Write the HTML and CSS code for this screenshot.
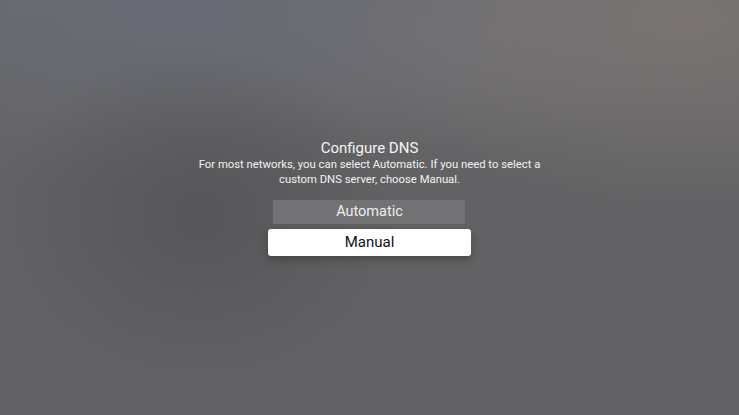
FILE: index.html
```html
<!DOCTYPE html>
<html lang="en">
<head>
<meta charset="utf-8">
<title>Configure DNS</title>
<link rel="stylesheet" href="styles.css">
</head>
<body>
<main class="screen">
  <section class="dialog">
    <h1 class="title">Configure DNS</h1>
    <p class="message">For most networks, you can select Automatic. If you need to select a<br>custom DNS server, choose Manual.</p>
    <div class="options">
      <button class="option">Automatic</button>
      <button class="option option-focused">Manual</button>
    </div>
  </section>
</main>
</body>
</html>
```
FILE: styles.css
```css
html, body {
  margin: 0;
  padding: 0;
  width: 739px;
  height: 415px;
  overflow: hidden;
}

.screen {
  width: 739px;
  height: 415px;
  box-sizing: border-box;
  padding-top: 139px;
  display: flex;
  flex-direction: column;
  align-items: center;
  font-family: Roboto, "Liberation Sans", sans-serif;
  background:
    radial-gradient(ellipse 200px 170px at 200px 215px, rgba(82,82,85,0.75), rgba(82,82,85,0) 100%),
    radial-gradient(ellipse 360px 160px at 170px 10px, rgba(104,108,118,0.9), rgba(104,108,118,0) 100%),
    radial-gradient(ellipse 340px 190px at 690px 20px, rgba(124,118,116,0.85), rgba(124,118,116,0) 100%),
    radial-gradient(ellipse 300px 120px at 440px 30px, rgba(118,116,120,0.7), rgba(118,116,120,0) 100%),
    linear-gradient(180deg, #6a696c 0%, #626264 45%, #626163 100%);
}

.dialog {
  display: flex;
  flex-direction: column;
  align-items: center;
}

.title {
  margin: 0;
  font-size: 15px;
  font-weight: 400;
  line-height: 18px;
  color: #f4f4f4;
}

.message {
  margin: 1px 0 0;
  font-size: 11.3px;
  line-height: 14.5px;
  color: #f2f2f2;
  text-align: center;
}

.options {
  margin-top: 13px;
  display: flex;
  flex-direction: column;
  align-items: center;
  gap: 5px;
}

.option {
  width: 192px;
  height: 24px;
  padding: 0;
  border: none;
  border-radius: 1px;
  background: #727275;
  color: #eeeeee;
  font-family: inherit;
  font-size: 14.5px;
  line-height: 24px;
}

.option-focused {
  width: 203px;
  height: 27px;
  border-radius: 3px;
  background: #ffffff;
  color: #111111;
  font-size: 15px;
  line-height: 27px;
  box-shadow: 0 4px 8px rgba(0,0,0,0.25);
}
```
